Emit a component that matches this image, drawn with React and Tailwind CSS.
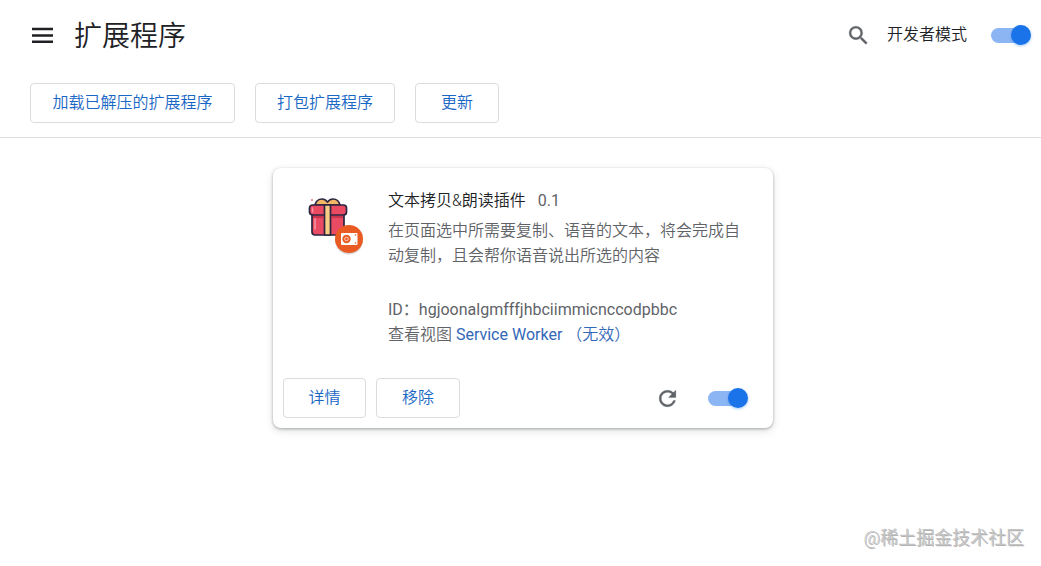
import { useState } from 'react';

const toolbarButtons = [
  { label: '加载已解压的扩展程序', width: 'w-[205px]' },
  { label: '打包扩展程序', width: 'w-[140px]' },
  { label: '更新', width: 'w-[84px]' },
];

function OutlineButton({ width, children }) {
  return (
    <button
      type="button"
      className={`${width} h-10 pb-px rounded border border-[#dadce0] bg-white text-base text-[#1967c4] hover:bg-blue-50`}
    >
      {children}
    </button>
  );
}

function Toggle({ id, label, checked, onChange }) {
  return (
    <input
      id={id}
      type="checkbox"
      role="switch"
      aria-label={label}
      checked={checked}
      onChange={(e) => onChange(e.target.checked)}
      className="relative h-5 w-10 shrink-0 cursor-pointer appearance-none before:absolute before:left-0 before:top-[3px] before:h-[15px] before:w-9 before:rounded-full before:bg-gray-300 after:absolute after:left-0 after:top-0 after:size-5 after:rounded-full after:bg-white after:shadow-[0_1px_3px_rgba(26,115,232,0.4)] checked:before:bg-[#8cb6f3] checked:after:left-5 checked:after:bg-[#1a73e8]"
    />
  );
}

function MenuIcon() {
  return (
    <svg width="22" height="18" viewBox="0 0 22 18" fill="#202124">
      <path d="M0 1.8h21v2.5H0zM0 8.2h21v2.5H0zM0 14.6h21v2.5H0z" />
    </svg>
  );
}

function SearchIcon() {
  return (
    <svg width="25" height="25" viewBox="0 0 24 24" fill="#5f6368" stroke="#5f6368" strokeWidth="0.3">
      <path d="M15.5 14h-.79l-.28-.27A6.47 6.47 0 0 0 16 9.5 6.5 6.5 0 1 0 9.5 16c1.61 0 3.09-.59 4.23-1.57l.27.28v.79l5 4.99L20.49 19l-4.99-5zm-6 0C7.01 14 5 11.99 5 9.5S7.01 5 9.5 5 14 7.01 14 9.5 11.99 14 9.5 14z" />
    </svg>
  );
}

function ReloadIcon() {
  return (
    <svg width="25" height="25" viewBox="0 0 24 24" fill="#5f6368" stroke="#5f6368" strokeWidth="0.3">
      <path d="M17.65 6.35A7.96 7.96 0 0 0 12 4a8 8 0 1 0 7.73 10h-2.08A6 6 0 1 1 12 6c1.66 0 3.14.69 4.22 1.78L13 11h7V4l-2.35 2.35z" />
    </svg>
  );
}

function GiftIcon() {
  return (
    <svg width="60" height="60" viewBox="0 0 60 60">
      {/* box */}
      <g stroke="#2b2540" strokeWidth="1.7" strokeLinejoin="round">
        <path d="M7 8c1-4 4-6 7-6 2 0 4 1 5.500 3 1.500-2 3.500-3 5.500-3 3 0 6 2 7 6z" fill="#f3b765" />
        <path d="M4 17h32v18q0 3-3 3H7q-3 0-3-3z" fill="#ea4a62" />
        <rect x="1.500" y="8" width="37" height="10" rx="3" fill="#ea4a62" />
        <path d="M16.500 8h6v30h-6z" fill="#f8cd86" />
      </g>
      <path d="M4.500 11v4M7 22v10" stroke="#f991a0" strokeWidth="1.600" strokeLinecap="round" />
      <path d="M23.500 19h11.500v2H23.500zM5 19h10.500v2H5z" fill="#c9344e" />
      <circle cx="4" cy="3" r="1" fill="#f06a80" />
      {/* unpacked badge */}
      <circle cx="41" cy="43.500" r="14" fill="#000" opacity="0.15" />
      <circle cx="41" cy="42" r="14" fill="#ea5b23" />
      <rect x="33" y="36" width="16.500" height="12" rx="1" fill="#fff" />
      <circle cx="38.500" cy="42" r="4.200" fill="#ea5b23" />
      <circle cx="38.500" cy="42" r="1.800" fill="none" stroke="#fbd0bd" strokeWidth="1" />
      <circle cx="47.500" cy="38" r="0.800" fill="#ea5b23" />
      <circle cx="47.500" cy="46" r="0.800" fill="#ea5b23" />
    </svg>
  );
}

function ExtensionCard() {
  const [enabled, setEnabled] = useState(true);

  return (
    <article className="w-[500px] rounded-lg bg-white shadow-[0_1px_3px_rgba(60,64,67,0.4),0_3px_8px_rgba(60,64,67,0.15)]">
      <div className="flex gap-5 pl-[35px] pr-5 pt-5">
        <div className="shrink-0 pt-[9px]">
          <GiftIcon />
        </div>
        <div className="min-w-0 flex-1 text-[#5f6368]">
          <div className="flex gap-3 leading-[25px]">
            <h2 className="text-[#202124]">文本拷贝&朗读插件</h2>
            <span className="font-normal">0.1</span>
          </div>
          <p className="mt-[5px] leading-[25px]">
            在页面选中所需要复制、语音的文本，将会完成自动复制，且会帮你语音说出所选的内容
          </p>
          <div className="mt-[29px] leading-[25px]">
            <p className="font-normal">ID：hgjoonalgmfffjhbciimmicnccodpbbc</p>
            <p>
              查看视图{' '}
              <a href="#worker" className="text-[#3367b8]">
                <span className="font-normal">Service Worker</span> （无效）
              </a>
            </p>
          </div>
        </div>
      </div>

      <div className="flex items-center gap-2.5 pb-2.5 pl-2.5 pr-[25px] pt-[31px]">
        <OutlineButton width="w-[83px]">详情</OutlineButton>
        <OutlineButton width="w-[84px]">移除</OutlineButton>
        <button type="button" aria-label="重新加载" className="ml-auto mr-[18px]">
          <ReloadIcon />
        </button>
        <Toggle id="enabled" label="启用" checked={enabled} onChange={setEnabled} />
      </div>
    </article>
  );
}

export default function App() {
  const [devMode, setDevMode] = useState(true);

  return (
    <div className="flex min-h-screen flex-col bg-white font-['Roboto','Noto_Sans_CJK_SC',sans-serif] text-base font-[350] text-[#202124]">
      <header className="border-b border-[#dadce0]">
        <div className="flex h-[70px] items-center pl-8 pr-2.5">
          <button type="button" aria-label="主菜单">
            <MenuIcon />
          </button>
          <h1 className="ml-5 pt-1 text-[28px]">扩展程序</h1>
          <div className="ml-auto flex items-center">
            <button type="button" aria-label="搜索">
              <SearchIcon />
            </button>
            <label htmlFor="dev-mode" className="ml-4 mr-6">
              开发者模式
            </label>
            <Toggle id="dev-mode" label="开发者模式" checked={devMode} onChange={setDevMode} />
          </div>
        </div>
        <div className="flex gap-5 px-[30px] pb-3.5 pt-[13px]">
          {toolbarButtons.map((item) => (
            <OutlineButton key={item.label} width={item.width}>
              {item.label}
            </OutlineButton>
          ))}
        </div>
      </header>

      <main className="flex flex-1 justify-center pl-[5px] pt-[30px]">
        <div>
          <ExtensionCard />
        </div>
      </main>

      <footer className="pb-3.5 pr-[17px] text-right text-lg text-[#c4c4c4] [text-shadow:1px_1px_0_#80808099]">
        @稀土掘金技术社区
      </footer>
    </div>
  );
}
